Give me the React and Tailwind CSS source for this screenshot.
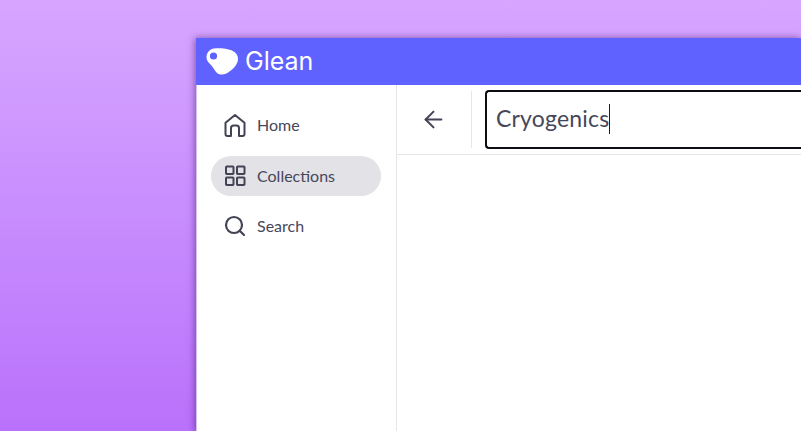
import { ArrowLeft, Search } from "lucide-react";

const font = "font-['Lato','Noto_Sans',sans-serif]";

function HomeIcon() {
  return (
    <svg width="24" height="24" viewBox="0 0 24 24" fill="none" stroke="#434356" strokeWidth="2" strokeLinejoin="round" strokeLinecap="round">
      <path d="M2.500 9.800 12 2l9.500 7.800V21a2 2 0 0 1-2 2h-3.500v-8a2.500 2.500 0 0 0-2.500-2.500h-3A2.500 2.500 0 0 0 8 15v8H4.500a2 2 0 0 1-2-2z" />
    </svg>
  );
}

function GridIcon() {
  return (
    <svg width="24" height="24" viewBox="0 0 24 24" fill="none" stroke="#434356" strokeWidth="2" strokeLinejoin="round">
      <rect x="3" y="2.500" width="7.500" height="7.500" rx="0.800" />
      <rect x="14" y="2.500" width="7.500" height="7.500" rx="0.800" />
      <rect x="3" y="13.500" width="7.500" height="7.500" rx="0.800" />
      <rect x="14" y="13.500" width="7.500" height="7.500" rx="0.800" />
    </svg>
  );
}

function GleanLogo() {
  return (
    <svg width="33" height="27" viewBox="0 0 33 27">
      <path d="M8 .5C15 -.4 24 .6 28.500 4c3.500 2.800 4.300 6.700 2.800 10.500-1.800 4.300-6 8.500-11 11-3.500 1.700-7.500 1.500-9.800-1-2-2.200-3-4.700-5.500-7.500C2.500 14.500.5 12.500.5 9.500.5 5 3.500 1.100 8 .5z" fill="#fff" />
      <circle cx="7.500" cy="8" r="3.600" fill="#5f62ff" />
    </svg>
  );
}

function NavItem({ icon, label, active }) {
  return (
    <div className={`flex h-10 items-center gap-[10px] rounded-full pl-[12px] text-[16px] text-[#47475a] ${active ? "bg-[#e2e2e7]" : ""}`}>
      {icon}
      <span>{label}</span>
    </div>
  );
}

export default function App() {
  return (
    <div className={`flex h-[431px] w-[801px] flex-col overflow-hidden bg-gradient-to-b from-[#d7a6ff] to-[#b971fb] pl-[196px] pt-[38px] ${font}`}>
      <div className="flex flex-1 flex-col bg-white shadow-[-1px_0_7px_rgba(70,30,110,0.6)]">
        <header className="flex h-[47px] shrink-0 items-center gap-[6px] bg-[#5f62ff] pl-[10px]">
          <GleanLogo />
          <span className="font-['Inter',sans-serif] text-[25px] font-normal leading-none tracking-[0px] text-white">Glean</span>
        </header>
        <div className="flex flex-1">
          <aside className="flex w-[201px] shrink-0 flex-col gap-[10.500px] border-x border-l-[#d6bdf0] border-r-[#e6e6e9] pl-[14px] pr-[15px] pt-[20px]">
            <NavItem icon={<HomeIcon />} label="Home" />
            <NavItem icon={<GridIcon />} label="Collections" active />
            <NavItem icon={<Search size={24} strokeWidth={2.2} color="#434356" />} label="Search" />
          </aside>
          <main className="flex-1">
            <div className="flex h-[70px] items-center border-b border-[#e6e6e9] pb-[1px]">
              <div className="flex h-[57px] w-[75px] shrink-0 items-center justify-center border-r border-[#e6e6e9] pr-[1px]">
                <ArrowLeft size={27} strokeWidth={1.8} color="#434356" />
              </div>
              <div className="ml-[13px] flex h-[59px] flex-1 items-center rounded-l-[4px] border-2 border-r-0 border-[#0c0c12] pb-[1px] pl-[9px] text-[23px] tracking-[0.2px] text-[#47475a]">
                <span>Cryogenics</span>
                <span className="h-[30px] w-px bg-[#1b1b2a]" />
              </div>
            </div>
          </main>
        </div>
      </div>
    </div>
  );
}
